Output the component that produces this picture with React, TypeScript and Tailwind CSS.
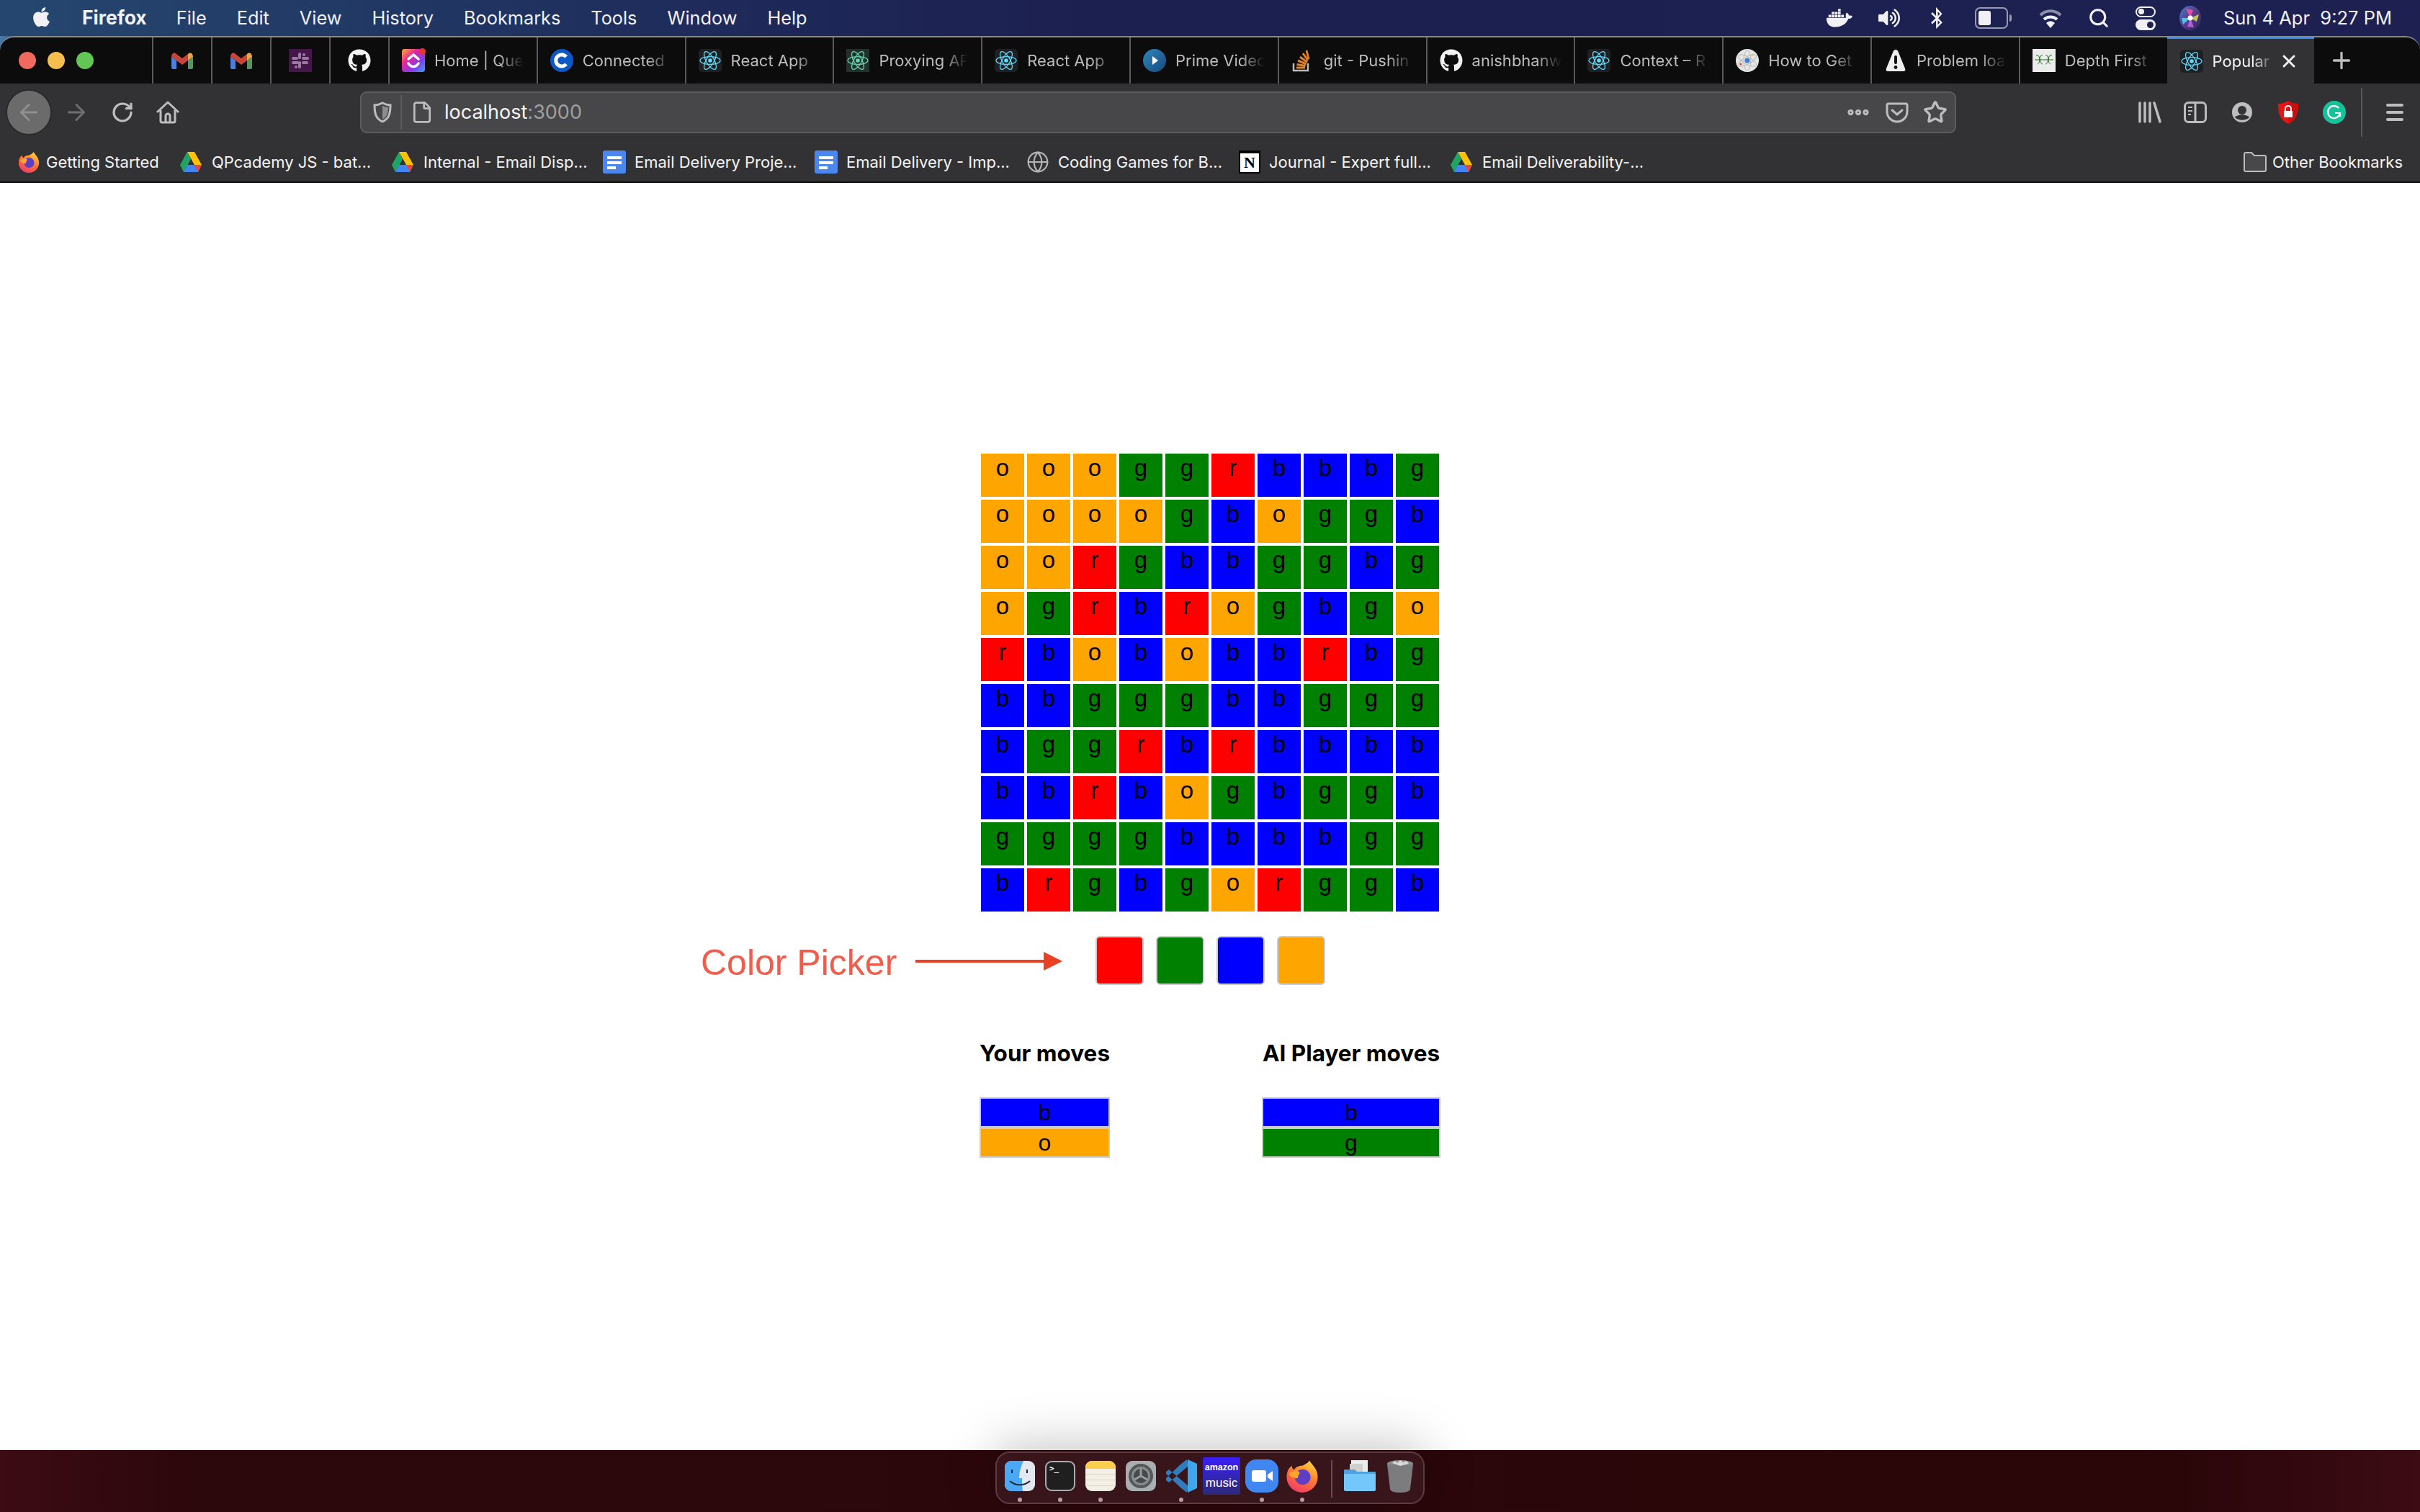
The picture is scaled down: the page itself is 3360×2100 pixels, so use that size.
import React from 'react';
import { FaApple, FaBluetoothB, FaDocker, FaGithub, FaVolumeUp } from 'react-icons/fa';
import { ArrowLeft, ArrowRight, Ellipsis, File, Globe, Plus, RotateCw, Search, Star, X } from 'lucide-react';

const COLORS: Record<string, string> = {
  r: 'bg-[#ff0000]',
  g: 'bg-[#008000]',
  b: 'bg-[#0000ff]',
  o: 'bg-[#ffa500]',
};

const BOARD = [
  'oooggrbbbg',
  'oooogboggb',
  'oorgbbggbg',
  'ogrbrogbgo',
  'rbobobbrbg',
  'bbgggbbggg',
  'bggrbrbbbb',
  'bbrbogbggb',
  'ggggbbbbgg',
  'brgbgorggb',
];

const Gmail = () => (
  <svg width="30" height="23" viewBox="0 0 30 23">
    <path d="M0 6l7 5v12H2a2 2 0 0 1-2-2z" fill="#4a7fe0" />
    <path d="M30 6l-7 5v12h5a2 2 0 0 0 2-2z" fill="#4f9a5c" />
    <path d="M0 6c0-5 4-7 7-4l8 6 8-6v9l-8 6-8-6-7-5z" fill="#c8453a" />
    <path d="M23 2c3-3 7-1 7 4l-7 5z" fill="#e2ab3c" />
  </svg>
);

const Slack = () => (
  <svg width="32" height="32" viewBox="0 0 32 32">
    <rect width="32" height="32" fill="#44164a" />
    <g fill="#9a7aa0">
      <rect x="13" y="5" width="4" height="9" rx="2" />
      <rect x="18" y="11" width="10" height="4" rx="2" />
      <rect x="4" y="17" width="10" height="4" rx="2" />
      <rect x="4" y="11" width="9" height="4" rx="2" />
      <rect x="13" y="17" width="4" height="10" rx="2" />
      <rect x="18" y="17" width="9" height="4" rx="2" />
      <rect x="19" y="6" width="4" height="4" rx="2" />
      <rect x="8" y="23" width="4" height="4" rx="2" />
    </g>
  </svg>
);

const ClickUp = () => (
  <div className="relative h-8 w-8">
    <svg width="32" height="32" viewBox="0 0 32 32">
      <defs>
        <linearGradient id="clickup" x1="0" y1="0" x2="1" y2="1">
          <stop offset="0" stopColor="#ffb02e" />
          <stop offset="0.35" stopColor="#e5249a" />
          <stop offset="0.7" stopColor="#7b3ff2" />
          <stop offset="1" stopColor="#3fa9f5" />
        </linearGradient>
      </defs>
      <rect width="32" height="32" rx="4" fill="url(#clickup)" />
      <path d="M9 14l7-6 7 6M9 20c4 6 10 6 14 0" fill="none" stroke="#fff" strokeWidth="3.5" strokeLinecap="round" />
    </svg>
    <span className="absolute -right-[1px] -top-[1px] h-[9px] w-[9px] rounded-full bg-[#e5352c]" />
  </div>
);

const CoderC = () => (
  <svg width="32" height="32" viewBox="0 0 32 32">
    <circle cx="16" cy="16" r="16" fill="#0b58c6" />
    <path d="M22 11a8 8 0 1 0 0 10" fill="none" stroke="#fff" strokeWidth="5" />
  </svg>
);

const ReactLogo = ({ color = '#61dafb', bg = '#1f2023', square = false }: { color?: string; bg?: string; square?: boolean }) => (
  <svg width="32" height="32" viewBox="0 0 32 32">
    <rect width="32" height="32" rx={square ? 0 : 5} fill={bg} />
    <g fill="none" stroke={color} strokeWidth="1.3">
      <ellipse cx="16" cy="16" rx="14" ry="5.4" />
      <ellipse cx="16" cy="16" rx="14" ry="5.4" transform="rotate(60 16 16)" />
      <ellipse cx="16" cy="16" rx="14" ry="5.4" transform="rotate(120 16 16)" />
    </g>
    <circle cx="16" cy="16" r="2.8" fill={color} />
  </svg>
);

const Prime = () => (
  <svg width="32" height="32" viewBox="0 0 32 32">
    <defs>
      <linearGradient id="prime" x1="0" y1="0" x2="1" y2="1">
        <stop offset="0" stopColor="#2f86bd" />
        <stop offset="1" stopColor="#174a7c" />
      </linearGradient>
    </defs>
    <circle cx="16" cy="16" r="16" fill="url(#prime)" />
    <path d="M13 10l8 6-8 6z" fill="#fff" />
  </svg>
);

const StackOverflow = () => (
  <svg width="32" height="32" viewBox="0 0 32 32">
    <path d="M3 20v10h20V20" fill="none" stroke="#bcbbbb" strokeWidth="2.5" />
    <g stroke="#e0812c" strokeWidth="3">
      <path d="M7 26h12" />
      <path d="M7.5 21.5l12 2" />
      <path d="M9 16l11.5 5" />
      <path d="M12 11l10 7.5" />
      <path d="M16 6l7 10" />
      <path d="M21 2l3 12" />
    </g>
  </svg>
);

const AtomBall = () => (
  <svg width="32" height="32" viewBox="0 0 32 32">
    <circle cx="16" cy="16" r="16" fill="#e6e6e6" />
    <g fill="none" stroke="#b9b9b9" strokeWidth="1">
      <ellipse cx="16" cy="16" rx="14" ry="5" transform="rotate(30 16 16)" />
      <ellipse cx="16" cy="16" rx="14" ry="5" transform="rotate(-30 16 16)" />
      <ellipse cx="16" cy="16" rx="14" ry="5" transform="rotate(90 16 16)" />
    </g>
    <circle cx="16" cy="16" r="3.5" fill="#3b82d8" />
    <circle cx="7" cy="21" r="1.5" fill="#d1493f" />
    <circle cx="23" cy="8" r="1.5" fill="#e6c04a" />
  </svg>
);

const Warning = () => (
  <svg width="32" height="32" viewBox="0 0 32 32">
    <path d="M16 1c2 0 3 1 4 4l9 22c1 3 0 4-3 4H6c-3 0-4-1-3-4l9-22c1-3 2-4 4-4z" fill="#eeeeee" />
    <rect x="14" y="9" width="4" height="12" rx="2" fill="#111" />
    <circle cx="16" cy="25.5" r="2.4" fill="#111" />
  </svg>
);

const DepthFirst = () => (
  <svg width="32" height="32" viewBox="0 0 32 32">
    <rect width="32" height="32" fill="#ececec" />
    <g fill="none" stroke="#1a6b1a" strokeWidth="1">
      <path d="M3 15h26" />
      <path d="M5 9c5-3 7 10 2 12M14 9c-5-2-5 11 0 12M18 9c5-2 5 11 0 12M27 9c-5-3-7 10-2 12" />
    </g>
  </svg>
);

const Firefox = ({ size, id }: { size: number; id: string }) => (
  <svg width={size} height={size} viewBox="0 0 32 32">
    <defs>
      <linearGradient id={id} x1="0.7" y1="0" x2="0.2" y2="1">
        <stop offset="0" stopColor="#ffd23f" />
        <stop offset="0.45" stopColor="#ff7a2e" />
        <stop offset="1" stopColor="#f0336e" />
      </linearGradient>
    </defs>
    <path d="M23 1c2 4 8 8 8 16a15 15 0 0 1-30 0C1 12 3 8 6 6c0 2 1 3 2 4 2-3 5-4 8-4 3-1 6-3 7-5z" fill={`url(#${id})`} />
    <circle cx="16.5" cy="17" r="7.5" fill="#5c3fc4" />
    <path d="M3 14c3-3 7-4 10-2 2 2-2 3-1 6-4 0-7-1-9-4z" fill="#ffa62e" />
  </svg>
);

const Drive = () => (
  <svg className="mr-[2px]" width="30" height="28" viewBox="0 0 30 28">
    <path d="M10 0L0 18l5 10 10-18z" fill="#1fa463" />
    <path d="M10 0h10l10 18H20z" fill="#ffc107" />
    <path d="M10 18h20l-5 10H5z" fill="#4285f4" />
    <path d="M20 18h10l-5 10z" fill="#e8453c" />
  </svg>
);

const Docs = () => (
  <svg width="32" height="32" viewBox="0 0 32 32">
    <rect width="32" height="32" rx="3" fill="#4b87ee" />
    <rect x="6" y="8" width="20" height="4" fill="#fff" />
    <rect x="6" y="15" width="20" height="4" fill="#fff" />
    <rect x="6" y="22" width="12" height="4" fill="#fff" />
  </svg>
);

const Notion = () => (
  <div className="flex h-[32px] w-[30px] items-center justify-center border-2 border-t-4 border-black bg-white font-['Liberation_Serif',serif] text-[22px] font-bold leading-none text-black">
    N
  </div>
);

const favicons: Record<string, React.ReactNode> = {
  clickup: <ClickUp />,
  coder: <CoderC />,
  react: <ReactLogo />,
  proxy: <ReactLogo color="#63d8b0" bg="#24302c" square />,
  prime: <Prime />,
  so: <StackOverflow />,
  github: <FaGithub className="text-[32px] text-[#f2f2f2]" />,
  atom: <AtomBall />,
  warn: <Warning />,
  dfs: <DepthFirst />,
};

const TABS = [
  { fav: 'clickup', title: 'Home | Que' },
  { fav: 'coder', title: 'Connected' },
  { fav: 'react', title: 'React App' },
  { fav: 'proxy', title: 'Proxying AP' },
  { fav: 'react', title: 'React App' },
  { fav: 'prime', title: 'Prime Video' },
  { fav: 'so', title: 'git - Pushin' },
  { fav: 'github', title: 'anishbhanw' },
  { fav: 'react', title: 'Context – R' },
  { fav: 'atom', title: 'How to Get' },
  { fav: 'warn', title: 'Problem loa' },
  { fav: 'dfs', title: 'Depth First' },
];

const MENU = ['File', 'Edit', 'View', 'History', 'Bookmarks', 'Tools', 'Window', 'Help'];

const BOOKMARKS = [
  { icon: <div className="-mr-[3px]"><Firefox size={30} id="ff-bookmark" /></div>, label: 'Getting Started', cls: 'w-[225px]' },
  { icon: <Drive />, label: 'QPcademy JS - bat...', cls: 'w-[294px]' },
  { icon: <Drive />, label: 'Internal - Email Disp...', cls: 'w-[293px]' },
  { icon: <Docs />, label: 'Email Delivery Proje...', cls: 'w-[294px]' },
  { icon: <Docs />, label: 'Email Delivery - Imp...', cls: 'w-[294px]' },
  { icon: <Globe size={32} strokeWidth={1.6} className="text-[#b5b5b5]" />, label: 'Coding Games for B...', cls: 'w-[295px]' },
  { icon: <Notion />, label: 'Journal - Expert full...', cls: 'w-[294px]' },
  { icon: <Drive />, label: 'Email Deliverability-...', cls: 'w-[270px]' },
];

const Wifi = () => (
  <svg width="32" height="30" viewBox="0 0 32 30" fill="none">
    <path d="M2 11a20 20 0 0 1 28 0" stroke="#8d8fa8" strokeWidth="4" />
    <path d="M7 17a13 13 0 0 1 18 0" stroke="#f0f0f5" strokeWidth="4" />
    <path d="M16 29l-6-7a8 8 0 0 1 12 0z" fill="#f0f0f5" />
  </svg>
);

const Battery = () => (
  <div className="flex items-center gap-[2px]">
    <div className="flex h-[30px] w-[46px] items-stretch rounded-[7px] border-2 border-[#9a9bb0] p-[3px]">
      <div className="w-[17px] rounded-[3px] bg-[#f0f0f5]" />
    </div>
    <div className="h-[10px] w-[3px] rounded-r bg-[#9a9bb0]" />
  </div>
);

const ControlCenter = () => (
  <div className="flex w-[28px] flex-col gap-[3px]">
    <div className="flex h-[15px] items-center rounded-full border-2 border-[#f0f0f5] px-[2px]">
      <div className="h-[8px] w-[8px] rounded-full bg-[#f0f0f5]" />
    </div>
    <div className="flex h-[15px] items-center justify-end rounded-full bg-[#f0f0f5] px-[3px]">
      <div className="h-[9px] w-[9px] rounded-full bg-[#1d2050]" />
    </div>
  </div>
);

const Siri = () => (
  <svg width="30" height="34" viewBox="0 0 30 34">
    <defs>
      <linearGradient id="siri" x1="0" y1="0" x2="1" y2="1">
        <stop offset="0" stopColor="#3f7fc4" />
        <stop offset="0.5" stopColor="#5b3a8c" />
        <stop offset="1" stopColor="#2a2550" />
      </linearGradient>
    </defs>
    <ellipse cx="15" cy="17" rx="15" ry="17" fill="url(#siri)" />
    <path d="M15 17L9 4l10 2z" fill="#e04fa0" />
    <path d="M15 17l12-5-3 10z" fill="#d8e84a" opacity="0.8" />
    <path d="M15 17L5 26l-2-9z" fill="#49c3e8" />
    <path d="M15 17l5 13-9-1z" fill="#b060d8" />
    <circle cx="15" cy="17" r="3.5" fill="#ffffff" />
  </svg>
);

const MenuBar = () => (
  <div className="flex h-[50px] items-center bg-[linear-gradient(to_right,#25476f,#1e2a5a_30%,#1c2050_45%,#1d2050)] pl-[42px] pr-[39px] font-[Inter,sans-serif] text-[25.3px] text-[#f1f1f5]">
    <FaApple className="mb-[4px] text-[31px]" />
    <span className="ml-[41px] text-[26.5px] font-bold">Firefox</span>
    <div className="ml-[41px] flex gap-[42px]">
      {MENU.map(m => (
        <span key={m}>{m}</span>
      ))}
    </div>
    <div className="ml-auto flex items-center">
      <FaDocker className="text-[36px]" />
      <FaVolumeUp className="ml-[36px] text-[30px]" />
      <FaBluetoothB className="ml-[36px] text-[30px]" />
      <div className="ml-[38px]">
        <Battery />
      </div>
      <div className="ml-[38px]">
        <Wifi />
      </div>
      <Search size={30} strokeWidth={2.5} className="ml-[36px]" />
      <div className="ml-[36px]">
        <ControlCenter />
      </div>
      <div className="ml-[33px]">
        <Siri />
      </div>
      <span className="ml-[31px] whitespace-pre text-[25.5px]">Sun 4 Apr  9:27 PM</span>
    </div>
  </div>
);

const TabStrip = () => (
  <div className="bg-[linear-gradient(to_right,#4a7aa8,#25476f_1%,#1d2050_50%)]">
    <div className="flex h-[66px] overflow-hidden rounded-t-[20px] border-t-2 border-[#8a8a8a] bg-[#0c0c0c] font-[Inter,sans-serif]">
      <div className="flex w-[211px] items-center gap-4 pl-[26px]">
        <span className="h-6 w-6 rounded-full bg-[#f16a5f]" />
        <span className="h-6 w-6 rounded-full bg-[#f6bd4f]" />
        <span className="h-6 w-6 rounded-full bg-[#62c655]" />
      </div>
      {[<Gmail key="a" />, <Gmail key="b" />, <Slack key="c" />, <FaGithub key="d" className="text-[32px] text-[#f2f2f2]" />].map(icon => (
        <div key={icon.key} className="flex w-[82px] items-center justify-center border-l-2 border-[#5a5a5a]">
          {icon}
        </div>
      ))}
      {TABS.map((tab, i) => (
        <div key={i} className="flex w-[205.8px] items-center border-l-2 border-[#5a5a5a] pl-[17px]">
          <div className="flex w-8 shrink-0 justify-center">{favicons[tab.fav]}</div>
          <span className="ml-[13px] w-[124px] whitespace-nowrap text-[22px] text-[#bcbcbc] [mask-image:linear-gradient(to_right,black_72%,transparent)]">
            {tab.title}
          </span>
        </div>
      ))}
      <div className="-mt-[2px] flex w-[204px] items-center border-t-4 border-[#2c8ef8] bg-[#323234] pl-[18px]">
        <ReactLogo />
        <span className="ml-[13px] w-[86px] whitespace-nowrap text-[22px] text-[#f4f4f4] [mask-image:linear-gradient(to_right,black_65%,transparent)]">
          Popular
        </span>
        <X size={28} strokeWidth={2.5} className="ml-[6px] text-[#f0f0f0]" />
      </div>
      <div className="flex flex-1 items-center pl-[20px]">
        <Plus size={36} strokeWidth={2.2} className="text-[#bdbdbd]" />
      </div>
    </div>
  </div>
);

const Toolbar = () => (
  <div className="flex h-[80px] items-center bg-[#323234] pl-2 pr-[20px] text-[#bdbdbd]">
    <div className="flex h-16 w-16 items-center justify-center rounded-full border-2 border-[#2a2a2a] bg-[#6b6b6b]">
      <ArrowLeft size={36} strokeWidth={2} className="text-[#8f8f8f]" />
    </div>
    <ArrowRight size={36} strokeWidth={2} className="ml-[16px] text-[#6f6f6f]" />
    <RotateCw size={32} strokeWidth={2.4} className="ml-[30px] text-[#bdbdbd]" />
    <svg className="ml-[30px]" width="34" height="34" viewBox="0 0 34 34" fill="none" stroke="#bdbdbd" strokeWidth="3" strokeLinejoin="round">
      <path d="M2 17L17 3l15 14" />
      <path d="M7 14v15a2 2 0 0 0 2 2h16a2 2 0 0 0 2-2V14" />
      <path d="M14 31v-9a3 3 0 0 1 6 0v9" />
    </svg>
    <div className="ml-[250px] flex h-[58px] w-[2216px] items-center rounded-[9px] border-2 border-[#5c5c5e] bg-[#474749] pl-[16px] pr-[10px]">
      <svg width="26" height="30" viewBox="0 0 26 30" fill="none">
        <path d="M13 2c4 2 7 3 11 3 0 12-2 19-11 23C4 24 2 17 2 5c4 0 7-1 11-3z" stroke="#bdbdbd" strokeWidth="3" />
        <path d="M13 6c3 1 5 2 8 2 0 8-2 13-8 17z" fill="#bdbdbd" opacity="0.6" />
      </svg>
      <div className="ml-[12px] h-[48px] w-[2px] bg-[#5c5c5e]" />
      <File size={32} strokeWidth={2} className="ml-[12px] text-[#bdbdbd]" />
      <span className="ml-[15px] font-[Inter,sans-serif] text-[27px] text-[#f4f4f4]">
        localhost<span className="text-[#a0a0a0]">:3000</span>
      </span>
      <Ellipsis size={36} strokeWidth={3.5} className="ml-auto text-[#bdbdbd]" />
      <svg className="ml-[20px]" width="32" height="30" viewBox="0 0 32 30" fill="none" stroke="#bdbdbd" strokeWidth="3">
        <path d="M2 5a2 2 0 0 1 2-2h24a2 2 0 0 1 2 2v9a14 14 0 0 1-28 0z" />
        <path d="M9 12l7 6 7-6" strokeLinecap="round" />
      </svg>
      <Star size={34} strokeWidth={2.4} className="ml-[20px] text-[#bdbdbd]" />
    </div>
    <svg className="ml-[253px]" width="32" height="30" viewBox="0 0 32 30" stroke="#bdbdbd" strokeWidth="3.5" strokeLinecap="round">
      <path d="M2 2v26M9 2v26M16 2v26M22 2l8 26" />
    </svg>
    <svg className="ml-[31px]" width="32" height="30" viewBox="0 0 32 30" fill="none" stroke="#bdbdbd" strokeWidth="3">
      <rect x="1.5" y="1.5" width="29" height="27" rx="5" />
      <path d="M16 2v26" />
      <path d="M6 8h6M6 13h6M6 18h4" strokeWidth="2" />
    </svg>
    <svg className="ml-[34px]" width="30" height="30" viewBox="0 0 30 30">
      <circle cx="15" cy="15" r="14" fill="#bdbdbd" />
      <circle cx="15" cy="12" r="6" fill="#323234" />
      <path d="M5 22c5-5 15-5 20 0-5 5-15 5-20 0z" fill="#323234" />
    </svg>
    <svg className="ml-[34px]" width="30" height="32" viewBox="0 0 30 32">
      <path d="M15 0c5 3 9 4 14 4 0 14-3 23-14 28C4 27 1 18 1 4c5 0 9-1 14-4z" fill="#e81313" />
      <path d="M15 0c5 3 9 4 14 4 0 14-3 23-14 28z" fill="#c90f0f" />
      <rect x="9" y="14" width="12" height="9" rx="1" fill="#fff" />
      <path d="M11 14v-3a4 4 0 0 1 8 0v3" fill="none" stroke="#fff" strokeWidth="2" />
    </svg>
    <svg className="ml-[33px]" width="32" height="32" viewBox="0 0 32 32" fill="none">
      <circle cx="16" cy="16" r="16" fill="#15c39a" />
      <path d="M22 10a8.5 8.5 0 1 0 2 7h-7m7 0v5" stroke="#fff" strokeWidth="2.2" />
    </svg>
    <div className="ml-[21px] h-[68px] w-[2px] bg-[#565658]" />
    <div className="ml-[33px] flex w-6 flex-col gap-[6px]">
      <div className="h-1 rounded bg-[#bdbdbd]" />
      <div className="h-1 rounded bg-[#bdbdbd]" />
      <div className="h-1 rounded bg-[#bdbdbd]" />
    </div>
  </div>
);

const BookmarksBar = () => (
  <div className="flex h-[58px] items-center border-b-2 border-[#0c0c0c] bg-[#323234] pl-[25px] pr-[24px] pt-[2px] font-[Inter,sans-serif] text-[22px] text-[#f4f4f4]">
    {BOOKMARKS.map(b => (
      <div key={b.label} className={`flex shrink-0 items-center gap-[12px] whitespace-nowrap ${b.cls}`}>
        {b.icon}
        <span>{b.label}</span>
      </div>
    ))}
    <div className="ml-auto flex items-center gap-2 whitespace-nowrap">
      <svg width="32" height="28" viewBox="0 0 32 28" fill="#48484a" stroke="#bdbdbd" strokeWidth="2">
        <path d="M1 3a2 2 0 0 1 2-2h8l4 4h14a2 2 0 0 1 2 2v18a2 2 0 0 1-2 2H3a2 2 0 0 1-2-2z" />
      </svg>
      <span>Other Bookmarks</span>
    </div>
  </div>
);

const Board = () => (
  <div className="grid w-[636px] grid-cols-10 gap-1">
    {BOARD.join('')
      .split('')
      .map((c, i) => (
        <div key={i} className={`h-[60px] text-center text-[33px] leading-[40px] text-black ${COLORS[c]}`}>
          {c}
        </div>
      ))}
  </div>
);

const ColorPicker = () => (
  <div className="relative mt-[34px] flex w-[636px] gap-[17px] pl-[159px]">
    {/* annotation drawn over the page in the screenshot */}
    <div className="absolute left-[-389px] top-[-2px] flex items-center">
      <span className="whitespace-nowrap pt-[4px] text-[50px] leading-[70px] text-[#f15c4d]">Color Picker</span>
      <svg className="ml-[26px]" width="204" height="26" viewBox="0 0 204 26">
        <path d="M0 11h178V0l26 13-26 13V15H0z" fill="#ea4125" />
      </svg>
    </div>
    {['r', 'g', 'b', 'o'].map(c => (
      <div key={c} className={`h-[68px] w-[67px] rounded-[6px] border-2 border-[#cccccc] ${COLORS[c]}`} />
    ))}
  </div>
);

const MovesTable = ({ title, moves, width }: { title: string; moves: string; width: string }) => (
  <div className={width}>
    <h3 className="whitespace-nowrap text-center font-[Inter,sans-serif] text-[31.5px] font-bold leading-[38px] text-black">{title}</h3>
    <div className="mt-[42px] flex flex-col gap-1 border-2 border-[#cccccc] bg-[#cccccc]">
      {moves.split('').map((m, i) => (
        <div key={i} className={`h-[38px] text-center text-[32px] leading-[38px] text-black ${COLORS[m]}`}>
          {m}
        </div>
      ))}
    </div>
  </div>
);

const Page = () => (
  <div className="flex h-[1760px] flex-col items-center rounded-b-[20px] bg-white pt-[376px] font-['Liberation_Sans',sans-serif]">
    <Board />
    <ColorPicker />
    <div className="mt-[76px] flex w-[640px] justify-between">
      <MovesTable title="Your moves" moves="bo" width="w-[181px]" />
      <MovesTable title="AI Player moves" moves="bg" width="w-[248px]" />
    </div>
  </div>
);

const Finder = () => (
  <svg width="42" height="42" viewBox="0 0 42 42">
    <rect width="42" height="42" rx="9" fill="#e3e8ef" />
    <path d="M9 0h17c-4 9-6 16-6 24h4c0 6 0 12 1 18H9a9 9 0 0 1-9-9V9a9 9 0 0 1 9-9z" fill="#4aa8f5" />
    <path d="M10 12v5M31 12v5" stroke="#1d2b3a" strokeWidth="2" />
    <path d="M7 28c8 7 20 7 28 0" fill="none" stroke="#1d2b3a" strokeWidth="2" />
  </svg>
);

const Terminal = () => (
  <div className="flex h-[42px] w-[42px] items-start rounded-[9px] border-2 border-[#a9adb0] bg-[#1f1f1f] pl-1 pt-[2px] font-['DejaVu_Sans_Mono',monospace] text-[11px] font-bold leading-[14px] text-white">
    &gt;_
  </div>
);

const Notes = () => (
  <div className="h-[42px] w-[42px] overflow-hidden rounded-[9px] bg-[#f3efe4]">
    <div className="h-[11px] bg-[#fbce4c]" />
    <div className="mt-[7px] h-px bg-[#dcd8cc]" />
    <div className="mt-[7px] h-px bg-[#dcd8cc]" />
    <div className="mt-[7px] h-px bg-[#dcd8cc]" />
  </div>
);

const Settings = () => (
  <svg width="42" height="42" viewBox="0 0 42 42">
    <rect width="42" height="42" rx="9" fill="#a9aeae" />
    <circle cx="21" cy="21" r="17" fill="#55585a" />
    <circle cx="21" cy="21" r="13" fill="#8a8d8e" />
    <circle cx="21" cy="21" r="10" fill="#474a4c" />
    <path d="M21 21V11M21 21l9 5M21 21l-9 5" stroke="#9a9d9e" strokeWidth="3" />
  </svg>
);

const VSCode = () => (
  <svg width="46" height="46" viewBox="0 0 46 46">
    <path d="M2 17l4-3 27 23-2 9-8-6L2 20zM2 29l4 3L33 9l-2-9-8 6L2 26z" fill="#2f7dbd" />
    <path d="M32 0l13 6v34l-13 6z" fill="#3ea6ed" />
  </svg>
);

const AmazonMusic = () => (
  <div className="flex h-[52px] w-[52px] flex-col items-center justify-center rounded-[3px] bg-[linear-gradient(to_bottom,#3a1ff8,#2c2a78)] font-['Liberation_Sans',sans-serif] leading-none text-white">
    <span className="text-[12.5px] font-bold">amazon</span>
    <span className="mt-[6px] text-[17px]">music</span>
  </div>
);

const ZoomApp = () => (
  <svg width="46" height="46" viewBox="0 0 46 46">
    <rect width="46" height="46" rx="15" fill="#4087f2" />
    <rect x="9" y="15" width="20" height="16" rx="3" fill="#fff" />
    <path d="M31 21l7-5v14l-7-5z" fill="#fff" />
  </svg>
);

const DockFolder = () => (
  <svg width="44" height="46" viewBox="0 0 44 46">
    <path d="M10 1h23v20H10z" fill="#ececec" />
    <path d="M8 6h18v15H8z" fill="#d0d0d0" />
    <path d="M0 16a2 2 0 0 1 2-2h13l3 3h24a2 2 0 0 1 2 2v23a2 2 0 0 1-2 2H2a2 2 0 0 1-2-2z" fill="#74c7fa" />
    <path d="M0 16a2 2 0 0 1 2-2h13l3 3h24a2 2 0 0 1 2 2v1H0z" fill="#4fa3dc" />
  </svg>
);

const Trash = () => (
  <svg width="38" height="46" viewBox="0 0 38 46">
    <ellipse cx="19" cy="6" rx="18" ry="5" fill="#8c8c8c" />
    <path d="M1 7h36l-4 34c0 3-6 5-14 5S5 44 5 41z" fill="#7c7c7e" />
    <path d="M8 5l4-3 3 3 4-4 4 3 5-2 3 4-12 3z" fill="#d8d8d8" />
  </svg>
);

const DOCK = [
  { key: 'finder', icon: <Finder />, open: true },
  { key: 'terminal', icon: <Terminal />, open: true },
  { key: 'notes', icon: <Notes />, open: true },
  { key: 'settings', icon: <Settings />, open: false },
  { key: 'vscode', icon: <VSCode />, open: true },
  { key: 'amazon', icon: <AmazonMusic />, open: false },
  { key: 'zoom', icon: <ZoomApp />, open: true },
  { key: 'firefox', icon: <Firefox size={46} id="ff-dock" />, open: true },
];

const DockSlot = ({ icon, open }: { icon: React.ReactNode; open: boolean }) => (
  <div className="flex w-[56px] flex-col items-center">
    <div className="flex h-[60px] items-center">{icon}</div>
    {open && <div className="h-[6px] w-[6px] rounded-full bg-[#b89aa5]" />}
  </div>
);

const Dock = () => (
  <div className="flex h-[86px] justify-center bg-[linear-gradient(to_right,#3c0b14,#2c070c_8%,#2a0609_90%,#3c0b14)] pt-[2px]">
    <div className="relative flex h-[73px] w-[596px] rounded-[20px] border-2 border-[#5b3a40] bg-[#38141b] pl-[4px] pt-[2px] shadow-[0_-6px_70px_rgba(0,0,0,0.25)]">
      {DOCK.map(d => (
        <DockSlot key={d.key} icon={d.icon} open={d.open} />
      ))}
      <div className="ml-[12px] mt-[8px] h-[52px] w-[2px] bg-[#6b4a50]" />
      <div className="ml-[10px]">
        <DockSlot icon={<DockFolder />} open={false} />
      </div>
      <DockSlot icon={<Trash />} open={false} />
    </div>
  </div>
);

const App: React.FC = () => (
  <div className="h-[2100px] w-[3360px] overflow-hidden">
    <MenuBar />
    <TabStrip />
    <Toolbar />
    <BookmarksBar />
    <Page />
    <Dock />
  </div>
);

export default App;
